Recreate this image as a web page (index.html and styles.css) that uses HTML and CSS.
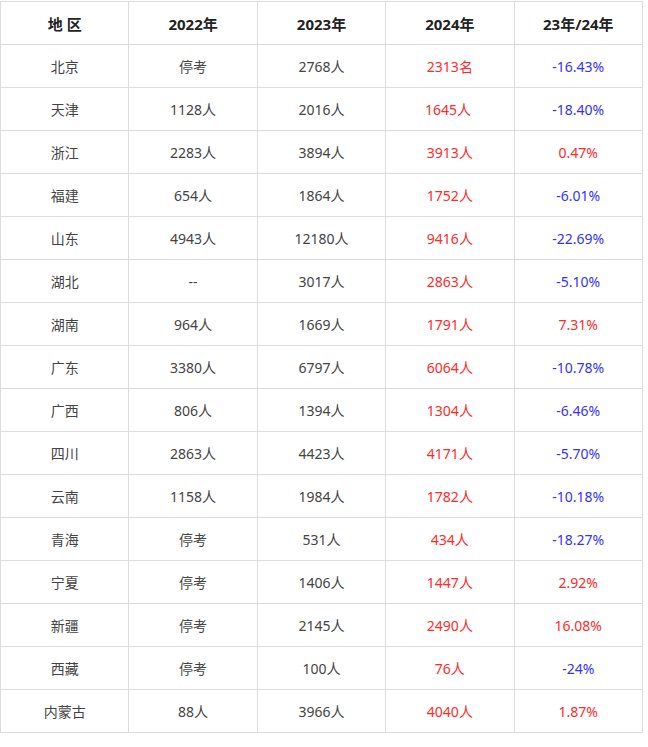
FILE: index.html
```html
<!DOCTYPE html>
<html lang="zh">
<head>
<meta charset="utf-8">
<link rel="stylesheet" href="styles.css">
</head>
<body>
<table class="data">
<thead>
<tr><th>地 区</th><th>2022年</th><th>2023年</th><th>2024年</th><th>23年/24年</th></tr>
</thead>
<tbody>
<tr><td>北京</td><td>停考</td><td>2768人</td><td class="red">2313名</td><td class="blue">-16.43%</td></tr>
<tr><td>天津</td><td>1128人</td><td>2016人</td><td class="red">1645人&nbsp;</td><td class="blue">-18.40%</td></tr>
<tr><td>浙江</td><td>2283人</td><td>3894人</td><td class="red">3913人</td><td class="red">0.47%</td></tr>
<tr><td>福建</td><td>654人</td><td>1864人</td><td class="red">1752人</td><td class="blue">-6.01%</td></tr>
<tr><td>山东</td><td>4943人</td><td>12180人</td><td class="red">9416人</td><td class="blue">-22.69%</td></tr>
<tr><td>湖北</td><td>--</td><td>3017人</td><td class="red">2863人</td><td class="blue">-5.10%</td></tr>
<tr><td>湖南</td><td>964人</td><td>1669人</td><td class="red">1791人</td><td class="red">7.31%</td></tr>
<tr><td>广东</td><td>3380人</td><td>6797人</td><td class="red">6064人</td><td class="blue">-10.78%</td></tr>
<tr><td>广西</td><td>806人</td><td>1394人</td><td class="red">1304人</td><td class="blue">-6.46%</td></tr>
<tr><td>四川</td><td>2863人</td><td>4423人</td><td class="red">4171人</td><td class="blue">-5.70%</td></tr>
<tr><td>云南</td><td>1158人</td><td>1984人</td><td class="red">1782人</td><td class="blue">-10.18%</td></tr>
<tr><td>青海</td><td>停考</td><td>531人</td><td class="red">434人</td><td class="blue">-18.27%</td></tr>
<tr><td>宁夏</td><td>停考</td><td>1406人</td><td class="red">1447人</td><td class="red">2.92%</td></tr>
<tr><td>新疆</td><td>停考</td><td>2145人</td><td class="red">2490人</td><td class="red">16.08%</td></tr>
<tr><td>西藏</td><td>停考</td><td>100人</td><td class="red">76人</td><td class="blue">-24%</td></tr>
<tr><td>内蒙古</td><td>88人</td><td>3966人</td><td class="red">4040人</td><td class="red">1.87%</td></tr>
</tbody>
</table>
</body>
</html>
```

FILE: styles.css
```css
html, body {
  margin: 0;
  padding: 0;
  background: #fff;
}
body {
  padding-top: 1px;
  font-family: "Noto Sans", "Noto Sans CJK SC", sans-serif;
  font-size: 14px;
  color: #333;
}
.data {
  border-collapse: collapse;
  width: 643px;
  table-layout: fixed;
}
.data th, .data td {
  border: 1px solid #dcdcdc;
  height: 43px;
  padding: 0;
  text-align: center;
  vertical-align: middle;
  box-sizing: border-box;
}
.data th {
  font-weight: bold;
  font-size: 15px;
  color: #222;
}
.data td {
  color: #444;
}
.data td.red { color: #ff2a2a; }
.data td.blue { color: #3333ff; }
```
